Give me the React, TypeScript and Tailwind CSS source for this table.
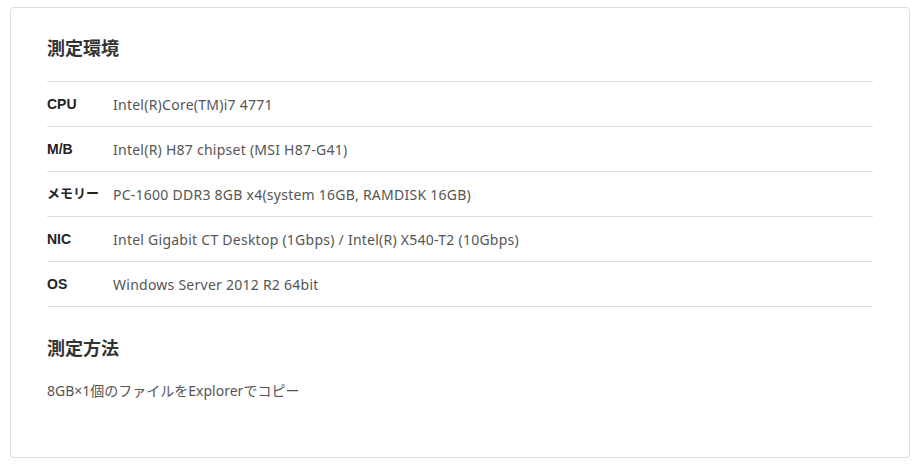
const rows: { label: string; value: string; jp?: boolean }[] = [
  { label: "CPU", value: "Intel(R)Core(TM)i7 4771" },
  { label: "M/B", value: "Intel(R) H87 chipset (MSI H87-G41)" },
  { label: "メモリー", value: "PC-1600 DDR3 8GB x4(system 16GB, RAMDISK 16GB)", jp: true },
  { label: "NIC", value: "Intel Gigabit CT Desktop (1Gbps) / Intel(R) X540-T2 (10Gbps)" },
  { label: "OS", value: "Windows Server 2012 R2 64bit" },
];

export default function App() {
  return (
    <div className="bg-white min-h-[465px] pt-[7px] pl-[10px] pr-[7px]">
      <div className="border border-[#dcdcdc] rounded-[4px] px-[36px] pt-[27px] pb-[56px] text-[#333] font-['Noto_Sans','Noto_Sans_CJK_JP',sans-serif]">
        <h2 className="text-[18px] leading-[24px] font-bold mb-[22px] text-[#333] font-['Noto_Sans_CJK_JP',sans-serif]">測定環境</h2>
        <div className="border-t border-[#dedede]">
          {rows.map((r) => (
            <div key={r.label} className="flex items-center h-[45px] border-b border-[#dedede]">
              <div className={`w-[66px] shrink-0 font-bold text-[#222] font-['Liberation_Sans','Noto_Sans_CJK_JP',sans-serif] ${r.jp ? "text-[13px]" : "text-[14px]"}`}>{r.label}</div>
              <div className="text-[14px] tracking-[0.25px] text-[#555] font-['Noto_Sans','Noto_Sans_CJK_JP',sans-serif]">{r.value}</div>
            </div>
          ))}
        </div>
        <h2 className="text-[18px] leading-[24px] font-bold mt-[28px] text-[#333] font-['Noto_Sans_CJK_JP',sans-serif]">測定方法</h2>
        <p className="text-[14px] leading-[20px] text-[#555] mt-[22px]">8GB×1個のファイルをExplorerでコピー</p>
      </div>
    </div>
  );
}
